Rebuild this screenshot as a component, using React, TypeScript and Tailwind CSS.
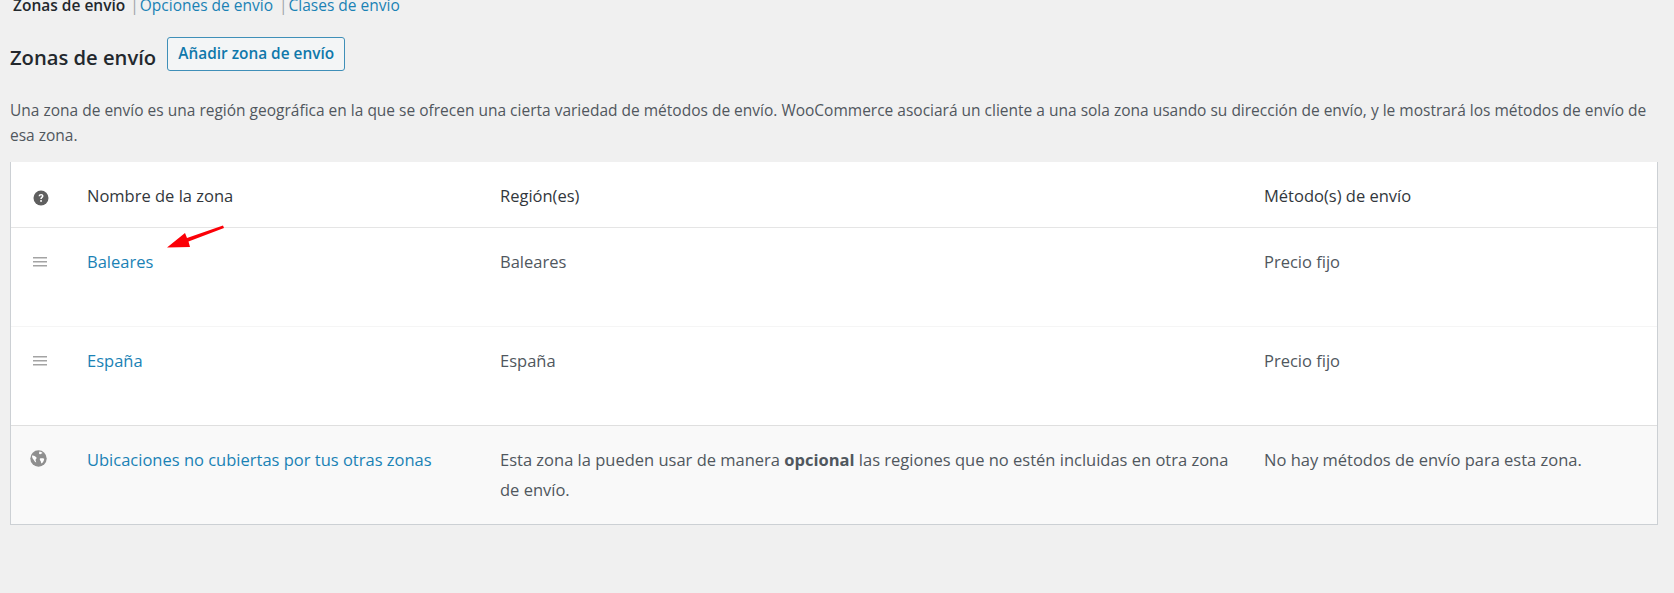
const font = "[font-family:'Open_Sans',sans-serif]";

const HelpIcon = () => (
    <svg width="16" height="16" viewBox="0 0 16 16">
        <circle cx="8" cy="8" r="7.5" fill="#5f5f5f" />
        <path d="M5.6 6.2c.1-1.5 1.1-2.3 2.5-2.3s2.4.8 2.4 2c0 1.8-1.7 1.7-1.7 3.2H7.3c0-2 1.6-2 1.6-3 0-.5-.3-.8-.8-.8-.6 0-.9.4-1 1z" fill="#fff" />
        <rect x="7.2" y="10.1" width="1.7" height="1.7" fill="#fff" />
    </svg>
);

const MenuIcon = () => (
    <svg width="14" height="10" viewBox="0 0 14 10">
        <rect y="0" width="14" height="1.5" fill="#a3a3a3" />
        <rect y="4" width="14" height="1.5" fill="#a3a3a3" />
        <rect y="8" width="14" height="1.5" fill="#a3a3a3" />
    </svg>
);

const GlobeIcon = () => (
    <svg width="17" height="17" viewBox="0 0 17 17">
        <circle cx="8.5" cy="8.5" r="8.2" fill="#8f8f8f" />
        <path d="M2 5.5c1.2-.2 2.2 0 3 .8.7.7 1.6.8 1.6 1.8 0 .9-1 .9-1 1.9 0 .9.6 1.6.6 2.6-1.4-.4-2-1.7-2.6-3C3 9.300 2 8 2 5.500zM9.500 1.600c1.200.2 2.300.7 3.100 1.500-.5.6-1.300.5-1.900.9-.6.4-1.500.2-1.700-.5-.1-.7.300-1.200.5-1.900zM10 8.500c1.200-.3 2.700-.3 4.200.2-.1 1.500-.9 3.600-2.600 4.800-.7-.6-.4-1.700-1-2.500-.5-.7-1.200-1.800-.6-2.500z" fill="#fff" />
    </svg>
);

const RedArrow = () => (
    <svg className="absolute left-[160px] top-[220px]" width="70" height="35" viewBox="160 220 70 35">
        <path d="M223 225.500 L187 238 L185 233 L167 247.500 L190 247 L188.500 241.500 L224 228 Z" fill="#fb0007" />
    </svg>
);

const rows = [
    { name: "Baleares", region: "Baleares", method: "Precio fijo" },
    { name: "España", region: "España", method: "Precio fijo" },
];

export default function App() {
    return (
        <div className={`${font} relative h-[593px] overflow-hidden bg-[#f0f0f0] text-[16.5px] text-[#50575e]`}>
            <nav className="-mt-[5px] flex h-[21px] items-center pl-[13px] text-[15.5px] leading-[21px]">
                <span className="font-semibold text-[#23282d]">Zonas de envío</span>
                <span className="ml-[5px] mr-[1px] text-[#a0a5aa]">|</span>
                <a className="text-[#1a82b5]">Opciones de envío</a>
                <span className="ml-[6px] mr-[1px] text-[#a0a5aa]">|</span>
                <a className="text-[#1a82b5]">Clases de envío</a>
            </nav>

            <div className="mt-[21px] flex items-start pl-[10px]">
                <h2 className="mt-[5px] text-[20.2px] leading-[30px] font-semibold text-[#23282d]">Zonas de envío</h2>
                <button className="ml-[11px] h-[34px] w-[178px] rounded-[3px] border border-[#3f8fb8] bg-[#f3f5f6] text-[15.4px] font-semibold text-[#0f78ab]">
                    Añadir zona de envío
                </button>
            </div>

            <p className="mt-[26px] w-[1650px] pl-[10px] text-[15.5px] leading-[25px]">
                Una zona de envío es una región geográfica en la que se ofrecen una cierta variedad de métodos de envío. WooCommerce asociará un cliente a una sola zona usando su dirección de envío, y le mostrará los métodos de envío de esa zona.
            </p>

            <div className="mt-[14px] ml-[10px] w-[1648px] border-r border-b border-l border-[#ccd0d4]">
                <div className="grid h-[66px] grid-cols-[76px_413px_764px_1fr] items-center border-b border-[#e5e5e5] bg-white pt-[3px] text-[#32373c]">
                    <div className="pt-[3px] pl-[22px] leading-none"><HelpIcon /></div>
                    <div>Nombre de la zona</div>
                    <div>Región(es)</div>
                    <div>Método(s) de envío</div>
                </div>
                {rows.map((row) => (
                    <div key={row.name} className="grid h-[99px] grid-cols-[76px_413px_764px_1fr] border-b border-[#f5f5f5] bg-white pt-[21.5px] leading-[24px]">
                        <div className="pt-[7px] pl-[22px] leading-none"><MenuIcon /></div>
                        <a className="text-[#1a82b5]">{row.name}</a>
                        <div>{row.region}</div>
                        <div>{row.method}</div>
                    </div>
                ))}
                <div className="-mt-px grid h-[99px] grid-cols-[76px_413px_764px_1fr] border-t border-[#dfdfdf] bg-[#f9f9f9] pt-[22px] leading-[30px]">
                    <div className="pt-[2px] pl-[19px] leading-none"><GlobeIcon /></div>
                    <a className="text-[#1a82b5] leading-[24px]">Ubicaciones no cubiertas por tus otras zonas</a>
                    <div className="-mt-[3px] pr-[20px]">
                        Esta zona la pueden usar de manera <strong className="font-bold">opcional</strong> las regiones que no estén incluidas en otra zona de envío.
                    </div>
                    <div className="leading-[24px]">No hay métodos de envío para esta zona.</div>
                </div>
            </div>

            <RedArrow />
        </div>
    );
}
